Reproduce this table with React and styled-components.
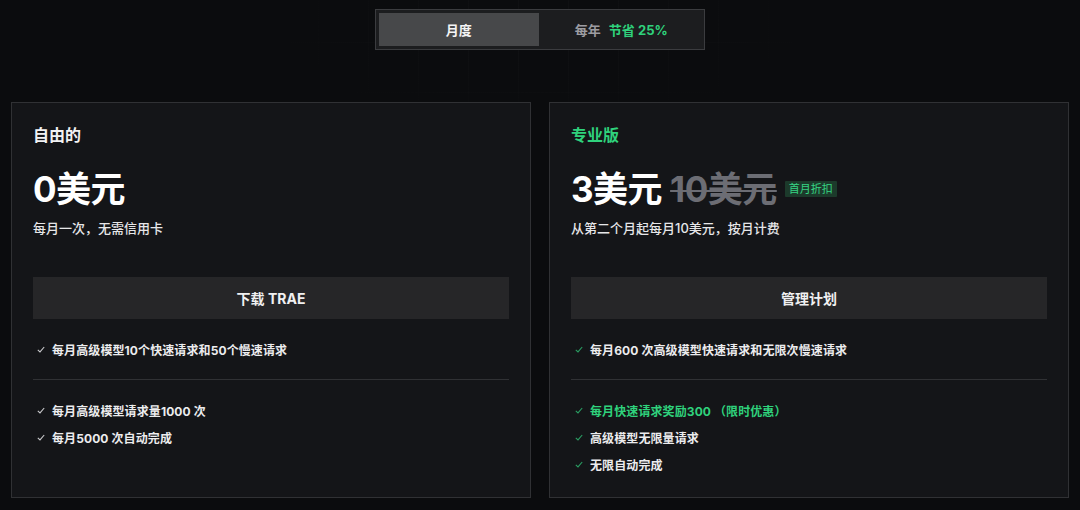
import React from "react";
import styled, { createGlobalStyle } from "styled-components";

// pricing page: billing toggle + two plan cards

const GlobalStyle = createGlobalStyle`
  html, body {
    margin: 0;
    padding: 0;
    background: #0b0c0e;
  }
  body {
    font-family: "Inter", "Noto Sans CJK SC", sans-serif;
    color: #f2f2f3;
    -webkit-font-smoothing: antialiased;
  }
`;

const Page = styled.div`
  position: relative;
  width: 1080px;
  height: 510px;
  box-sizing: border-box;
  padding: 9px 11px 0;
  overflow: hidden;
  background-color: #0b0c0e;
  background-image: radial-gradient(
      ellipse 260px 90px at 540px 30px,
      rgba(11, 12, 14, 0) 0%,
      #0b0c0e 100%
    ),
    linear-gradient(rgba(255, 255, 255, 0.025) 1px, transparent 1px),
    linear-gradient(90deg, rgba(255, 255, 255, 0.025) 1px, transparent 1px);
  background-size: 100% 100%, 50px 50px, 50px 50px;
  background-position: 0 0, 0 -8px, 18px 0;
`;

const ToggleRow = styled.div`
  display: flex;
  justify-content: center;
`;

const Toggle = styled.div`
  display: flex;
  width: 330px;
  height: 41px;
  box-sizing: border-box;
  padding: 3px;
  background: #1c1d1f;
  border: 1px solid #3b3c3f;
`;

const Tab = styled.div`
  flex: 1;
  display: flex;
  align-items: center;
  justify-content: center;
  gap: 8px;
  padding-left: ${(p) => (p.active ? 0 : 3)}px;
  font-size: 13px;
  font-weight: 700;
  color: ${(p) => (p.active ? "#f4f4f5" : "#9c9ca1")};
  background: ${(p) => (p.active ? "#47484a" : "transparent")};
`;

const Save = styled.span`
  color: #2fd27c;
`;

const Cards = styled.div`
  display: grid;
  grid-template-columns: 1fr 1fr;
  gap: 18px;
  margin-top: 52px;
  width: 1058px;
`;

const Card = styled.div`
  box-sizing: border-box;
  height: 396px;
  padding: 21px 21px 21px;
  background: #141518;
  border: 1px solid #303134;
  display: flex;
  flex-direction: column;
`;

const PlanName = styled.div`
  font-size: 16px;
  line-height: 22px;
  font-weight: 700;
  color: ${(p) => (p.accent ? "#2fd27c" : "#f2f2f3")};
`;

const PriceRow = styled.div`
  display: flex;
  align-items: center;
  gap: 8px;
  margin-top: 23px;
  height: 40px;
`;

const Price = styled.span`
  font-size: 35px;
  line-height: 40px;
  font-weight: 700;
  color: #ffffff;
  letter-spacing: -0.5px;
`;

const OldPrice = styled(Price)`
  color: #6c6d74;
  text-decoration: line-through;
  text-decoration-thickness: 2px;
`;

const Badge = styled.span`
  font-size: 11px;
  line-height: 16px;
  padding: 0 4px;
  color: #36d584;
  background: #1c3a2b;
  border-radius: 1px;
`;

const Note = styled.div`
  margin-top: 9px;
  font-size: 13px;
  line-height: 20px;
  font-weight: 500;
  color: #e6e6e8;
`;

const Action = styled.div`
  margin-top: 39px;
  height: 42px;
  display: flex;
  align-items: center;
  justify-content: center;
  background: #262628;
  font-size: 14px;
  font-weight: 700;
  color: #f0f0f1;
`;

const List = styled.div`
  display: flex;
  flex-direction: column;
  gap: 7px;
  margin-top: 20px;
`;

const Item = styled.div`
  display: flex;
  align-items: center;
  gap: 7px;
  height: 20px;
  padding-left: 4px;
  font-size: 12px;
  font-weight: 700;
  letter-spacing: 0.1px;
  color: ${(p) => (p.accent ? "#2fd27c" : "#ececee")};
`;

const Divider = styled.div`
  margin-top: 20px;
  height: 1px;
  background: #303134;
`;

const Check = ({ color }) => (
  <svg width="8" height="7" viewBox="0 0 8 7" fill="none">
    <path d="M0.8 3.8 L3 5.9 L7.2 1" stroke={color} strokeWidth="1.1" />
  </svg>
);

const plans = [
  {
    name: "自由的",
    price: "0美元",
    note: "每月一次，无需信用卡",
    action: "下载 TRAE",
    main: ["每月高级模型10个快速请求和50个慢速请求"],
    extra: [{ text: "每月高级模型请求量1000 次" }, { text: "每月5000 次自动完成" }],
    check: "#c9c9cc",
  },
  {
    name: "专业版",
    accent: true,
    price: "3美元",
    oldPrice: "10美元",
    badge: "首月折扣",
    note: "从第二个月起每月10美元，按月计费",
    action: "管理计划",
    main: ["每月600 次高级模型快速请求和无限次慢速请求"],
    extra: [
      { text: "每月快速请求奖励300 （限时优惠）", accent: true },
      { text: "高级模型无限量请求" },
      { text: "无限自动完成" },
    ],
    check: "#2a9e63",
  },
];

const App = () => {
  return (
    <Page>
      <GlobalStyle />
      <ToggleRow>
        <Toggle>
          <Tab active>月度</Tab>
          <Tab>
            每年 <Save>节省 25%</Save>
          </Tab>
        </Toggle>
      </ToggleRow>
      <Cards>
        {plans.map((plan) => (
          <Card key={plan.name}>
            <PlanName accent={plan.accent}>{plan.name}</PlanName>
            <PriceRow>
              <Price>{plan.price}</Price>
              {plan.oldPrice && <OldPrice>{plan.oldPrice}</OldPrice>}
              {plan.badge && <Badge>{plan.badge}</Badge>}
            </PriceRow>
            <Note>{plan.note}</Note>
            <Action>{plan.action}</Action>
            <List>
              {plan.main.map((t) => (
                <Item key={t}>
                  <Check color={plan.check} />
                  {t}
                </Item>
              ))}
            </List>
            <Divider />
            <List>
              {plan.extra.map((it) => (
                <Item key={it.text} accent={it.accent}>
                  <Check color={plan.check} />
                  {it.text}
                </Item>
              ))}
            </List>
          </Card>
        ))}
      </Cards>
    </Page>
  );
};

export default App;
